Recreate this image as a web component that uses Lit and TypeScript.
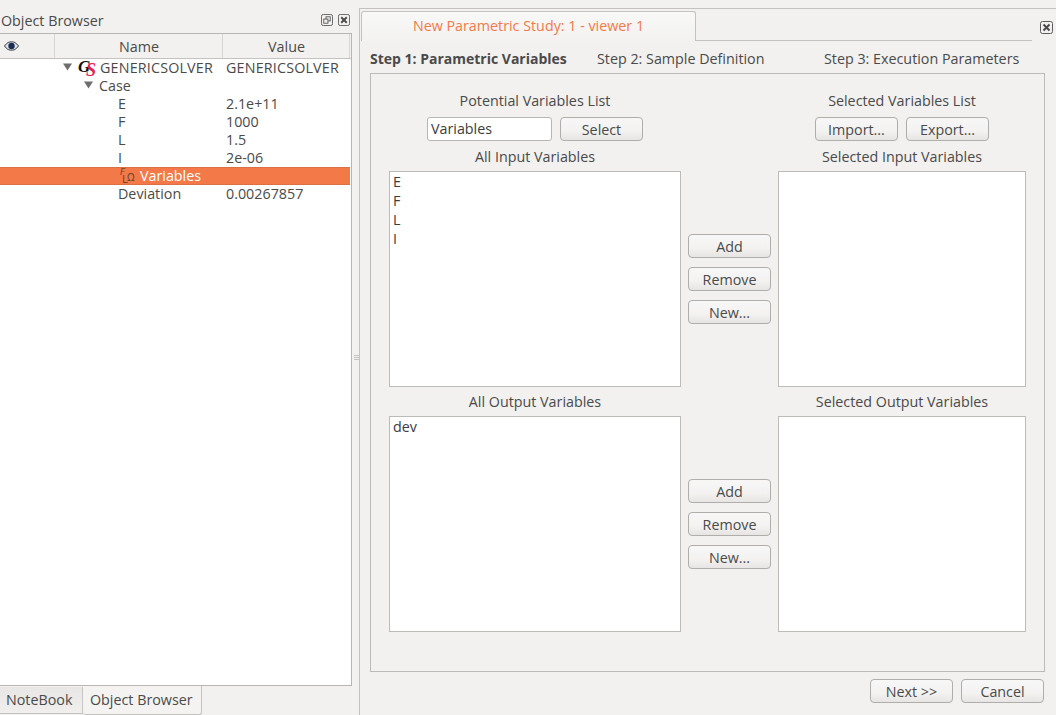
import { LitElement, html, css, svg } from 'lit';
import { customElement } from 'lit/decorators.js';

type TreeRow = { name: string; value?: string; indent: number; arrow?: boolean; icon?: 'gs' | 'var'; selected?: boolean };

const rows: TreeRow[] = [
  { name: 'GENERICSOLVER', value: 'GENERICSOLVER', indent: 63, arrow: true, icon: 'gs' },
  { name: 'Case', indent: 84, arrow: true },
  { name: 'E', value: '2.1e+11', indent: 118 },
  { name: 'F', value: '1000', indent: 118 },
  { name: 'L', value: '1.5', indent: 118 },
  { name: 'I', value: '2e-06', indent: 118 },
  { name: 'Variables', indent: 118, icon: 'var', selected: true },
  { name: 'Deviation', value: '0.00267857', indent: 118 },
];

const closeIcon = svg`<svg width="13" height="13" viewBox="0 0 13 13"><rect x=".5" y=".5" width="12" height="12" rx="2" fill="none" stroke="#5c5c5c"/><path d="M3.5 3.5l6 6M9.5 3.5l-6 6" stroke="#4a4a4a" stroke-width="2"/></svg>`;
const floatIcon = svg`<svg width="13" height="13" viewBox="0 0 13 13"><rect x=".5" y=".5" width="12" height="12" rx="2" fill="none" stroke="#5c5c5c"/><rect x="5.500" y="3" width="4.500" height="4.500" fill="none" stroke="#5c5c5c"/><rect x="3" y="5.500" width="4.500" height="4.500" fill="#f2f1f0" stroke="#5c5c5c"/></svg>`;
const eyeIcon = svg`<svg width="15" height="10" viewBox="0 0 15 10"><path d="M.5 5C3 1.600 5 .8 7.500.8S12 1.600 14.500 5C12 8.400 10 9.200 7.500 9.200S3 8.400.5 5z" fill="#dfe3e8" stroke="#33373d"/><circle cx="7.500" cy="5" r="3.200" fill="#1d2c52"/></svg>`;
const arrowIcon = svg`<svg width="9" height="8" viewBox="0 0 9 8"><path d="M0 .5h9L4.500 7.500z" fill="#6e6e6e"/></svg>`;

@customElement('app-root')
export class AppRoot extends LitElement {
  static override styles = css`
    :host {
      display: block;
      width: 1056px;
      height: 715px;
      overflow: hidden;
      background: #f2f1f0;
      color: #4a4a4a;
      font-family: "Open Sans", sans-serif;
      font-size: 14.3px;
    }
    * { box-sizing: border-box; }
    .page { display: flex; height: 715px; }

    /* left dock */
    .dock { width: 352px; display: flex; flex-direction: column; flex: none; }
    .dock-title { height: 33px; display: flex; align-items: center; padding: 7px 2px 0 1px; gap: 5px; }
    .dock-title span { flex: 1; }
    .dock-title svg { display: block; margin-top: -1px; width: 12px; height: 12px; }
    .tree { height: 653px; background: #fff; border: 1px solid #b8b6b3; border-left: 0; }
    .tree-head { display: grid; grid-template-columns: 55px 168px 127px; height: 25px; background: #f2f1f0; border-bottom: 1px solid #c4c2bf; }
    .tree-head div { display: flex; align-items: center; justify-content: center; border-right: 1px solid #d8d6d3; padding-left: 1px; }
    .tree-head div:first-child { justify-content: flex-start; padding-left: 4px; }
    .row { display: grid; grid-template-columns: 226px 1fr; height: 18px; line-height: 17px; padding-bottom: 1px; align-items: center; white-space: nowrap; }
    .row.selected { background: #f37a48; color: #fff; box-shadow: inset 0 1px #dc7043, inset 0 -1px #dc7043; width: 350px; }
    .name { display: flex; align-items: center; }
    .caps { letter-spacing: .18px; }
    .arrow { width: 9px; display: flex; margin-right: 6px; margin-top: -2px; }
    .gs { position: relative; width: 16px; height: 17px; margin-right: 6px; flex: none; font-family: "Liberation Serif", serif; font-style: italic; font-weight: 700; }
    .gs b { position: absolute; left: 0; top: -3px; font-size: 17px; line-height: 22px; color: #111; }
    .gs i { position: absolute; left: 8px; top: 1px; font-size: 18px; line-height: 20px; color: #e8204f; }
    .var { position: relative; width: 18px; height: 17px; margin-right: 4px; flex: none; color: #74452c; font-size: 9px; line-height: 9px; font-family: "DejaVu Sans", sans-serif; }
    .var span { position: absolute; }
    .var .f { left: 2px; top: 1px; font-style: italic; }
    .var .o { left: 9px; top: 6px; font-size: 10px; }
    .var .l { left: 4px; top: 8px; font-size: 10px; }
    .tabs { display: flex; height: 29px; align-items: flex-start; }
    .tab-off { width: 83px; height: 27px; margin-top: 1px; padding-left: 6px; line-height: 25px; background: linear-gradient(#e8e7e5, #f0efee); border-right: 1px solid #c8c6c3; border-bottom: 1px solid #c4c2bf; }
    .tab-on { width: 119px; height: 29px; padding-left: 7px; line-height: 27px; background: #f4f3f2; border: 1px solid #c4c2bf; border-top: 0; border-left: 0; border-radius: 0 0 3px 3px; }

    .splitter { width: 7px; flex: none; display: flex; flex-direction: column; align-items: center; justify-content: center; gap: 1px; }
    .splitter i { width: 5px; height: 1px; background: #c4c2bf; display: block; margin-left: 1px; }

    /* right study panel */
    .study { flex: 1; margin-top: 8px; border-top: 1px solid #c4c2bf; border-left: 1px solid #c4c2bf; padding: 2px 0 0 1px; display: flex; flex-direction: column; }
    .tab-bar { display: flex; height: 30px; position: relative; width: 671px; border-bottom: 1px solid #c4c2bf; }
    .tab { width: 335px; height: 30px; background: linear-gradient(#f8f8f7, #f3f2f1); border: 1px solid #c4c2bf; border-bottom: 0; border-radius: 3px 3px 0 0; color: #f37a48; text-align: center; line-height: 28px; }
    .tab-close { position: absolute; left: 679px; top: 8px; }
    .steps { display: flex; height: 32px; align-items: center; padding: 3px 0 0 9px; white-space: nowrap; }
    .steps span:nth-child(1) { width: 227px; font-weight: 700; font-size: 14px; }
    .steps span:nth-child(2) { width: 227px; }
    .group { margin-left: 9px; width: 675px; height: 599px; border: 1px solid #bdbbb8; padding: 16px 0 0 18px; }
    .grid { display: grid; grid-template-columns: 292px 97px 248px; }
    .label { height: 22px; line-height: 22px; text-align: center; margin-bottom: 3px; white-space: nowrap; }
    .controls { height: 24px; display: flex; justify-content: center; gap: 8px; margin: 5px 0; }
    .text-input { width: 125px; height: 24px; padding: 0 3px; line-height: 22px; background: #fff; border: 1px solid #b8b6b3; border-radius: 3px; color: #3c3c3c; }
    .btn { width: 83px; height: 24px; line-height: 23px; text-align: center; border: 1px solid #b0aeab; border-radius: 4px; background: linear-gradient(#f8f7f7 0%, #f3f2f1 60%, #e6e5e3 100%); color: #4a4a4a; }
    .list { height: 216px; padding: 0 3px; background: #fff; border: 1px solid #bdbbb8; line-height: 19px; color: #3c3c3c; }
    .list div { height: 19px; }
    .side { display: flex; flex-direction: column; align-items: center; gap: 9px; padding-top: 144px; }
    .side.lower { padding-top: 88px; }
    .row-gap { grid-column: 1 / -1; height: 4px; }
    .footer { display: flex; justify-content: flex-end; gap: 8px; padding: 7px 12px 0 0; }
  `;

  private _icon(row: TreeRow) {
    if (row.icon === 'gs') return html`<span class="gs"><b>G</b><i>S</i></span>`;
    if (row.icon === 'var') {
      return html`<span class="var"><span class="f">F</span><span class="o">Ω</span><span class="l">L</span></span>`;
    }
    return '';
  }

  private _list(items: string[]) {
    return html`<div class="list">${items.map((i) => html`<div>${i}</div>`)}</div>`;
  }

  private _side(lower = false) {
    return html`<div class="side ${lower ? 'lower' : ''}"><div class="btn">Add</div><div class="btn">Remove</div><div class="btn">New...</div></div>`;
  }

  override render() {
    return html`
      <div class="page">
        <div class="dock">
          <div class="dock-title"><span>Object Browser</span>${floatIcon}${closeIcon}</div>
          <div class="tree">
            <div class="tree-head"><div>${eyeIcon}</div><div>Name</div><div>Value</div></div>
            ${rows.map((r) => html`
              <div class="row ${r.selected ? 'selected' : ''}">
                <div class="name" style="padding-left:${r.indent}px">
                  ${r.arrow ? html`<span class="arrow">${arrowIcon}</span>` : ''}
                  ${this._icon(r)}<span class="${r.icon === 'gs' ? 'caps' : ''}">${r.name}</span>
                </div>
                <div class="${r.icon === 'gs' ? 'caps' : ''}">${r.value ?? ''}</div>
              </div>`)}
          </div>
          <div class="tabs"><div class="tab-off">NoteBook</div><div class="tab-on">Object Browser</div></div>
        </div>
        <div class="splitter"><i></i><i></i><i></i></div>
        <div class="study">
          <div class="tab-bar">
            <div class="tab">New Parametric Study: 1 - viewer 1</div>
            <div class="tab-close">${closeIcon}</div>
          </div>
          <div class="steps"><span>Step 1: Parametric Variables</span><span>Step 2: Sample Definition</span><span>Step 3: Execution Parameters</span></div>
          <div class="group">
            <div class="grid">
              <div>
                <div class="label">Potential Variables List</div>
                <div class="controls"><div class="text-input">Variables</div><div class="btn">Select</div></div>
                <div class="label">All Input Variables</div>
                ${this._list(['E', 'F', 'L', 'I'])}
              </div>
              ${this._side()}
              <div>
                <div class="label">Selected Variables List</div>
                <div class="controls"><div class="btn">Import...</div><div class="btn">Export...</div></div>
                <div class="label">Selected Input Variables</div>
                ${this._list([])}
              </div>
              <div class="row-gap"></div>
              <div>
                <div class="label">All Output Variables</div>
                ${this._list(['dev'])}
              </div>
              ${this._side(true)}
              <div>
                <div class="label">Selected Output Variables</div>
                ${this._list([])}
              </div>
            </div>
          </div>
          <div class="footer"><div class="btn">Next &gt;&gt;</div><div class="btn">Cancel</div></div>
        </div>
      </div>
    `;
  }
}
